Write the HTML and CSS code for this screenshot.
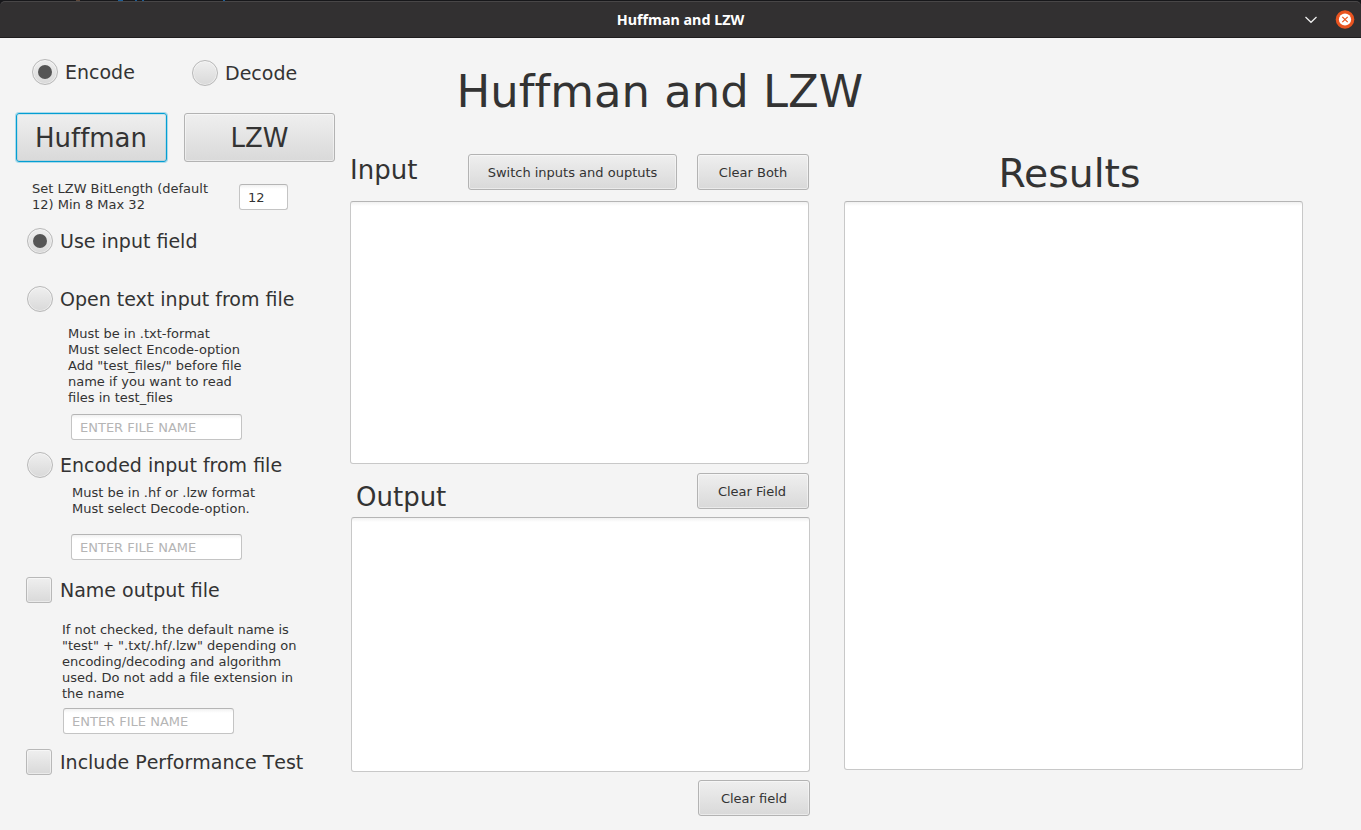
FILE: index.html
```html
<!DOCTYPE html>
<html lang="en">
<head>
<meta charset="utf-8">
<title>Huffman and LZW</title>
<link rel="stylesheet" href="styles.css">
</head>
<body>
<div class="desktop">
  <span class="speck speck-brown"></span><span class="speck speck-a"></span><span class="speck speck-b"></span><span class="speck speck-c"></span><span class="speck speck-d"></span>
</div>
<header class="titlebar">
  <div class="titlebar-text">Huffman and LZW</div>
  <div class="window-controls">
    <svg class="minimize" width="14" height="10" viewBox="0 0 14 10"><path d="M1.5 2L7 7.3L12.5 2" fill="none" stroke="#f0f0f0" stroke-width="1.2"/></svg>
    <svg class="close" width="20" height="20" viewBox="0 0 20 20"><circle cx="10" cy="9.5" r="9.3" fill="#e95420"/><circle cx="10" cy="9.5" r="6.1" fill="#fff"/><path d="M7.3 6.8L12.7 12.2M12.7 6.8L7.3 12.2" stroke="#e95420" stroke-width="1.2"/></svg>
  </div>
</header>
<main class="app">
  <section class="options">
    <div class="modes">
      <label class="choice"><span class="radio selected"></span><span>Encode</span></label>
      <label class="choice decode"><span class="radio"></span><span>Decode</span></label>
    </div>
    <div class="algorithms">
      <button class="button large focused">Huffman</button>
      <button class="button large">LZW</button>
    </div>
    <div class="bit-length">
      <p class="note">Set LZW BitLength (default<br>12) Min 8 Max 32</p>
      <input class="field short" value="12">
    </div>
    <label class="choice use-input"><span class="radio selected"></span><span>Use input field</span></label>
    <label class="choice open-text"><span class="radio"></span><span>Open text input from file</span></label>
    <p class="note text-note">Must be in .txt-format<br>Must select Encode-option<br>Add "test_files/" before file<br>name if you want to read<br>files in test_files</p>
    <input class="field text-file" placeholder="ENTER FILE NAME">
    <label class="choice open-encoded"><span class="radio"></span><span>Encoded input from file</span></label>
    <p class="note encoded-note">Must be in .hf or .lzw format<br>Must select Decode-option.</p>
    <input class="field encoded-file" placeholder="ENTER FILE NAME">
    <label class="choice name-output"><span class="checkbox"></span><span>Name output file</span></label>
    <p class="note output-note">If not checked, the default name is<br>"test" + ".txt/.hf/.lzw" depending on<br>encoding/decoding and algorithm<br>used. Do not add a file extension in<br>the name</p>
    <input class="field output-file" placeholder="ENTER FILE NAME">
    <label class="choice performance"><span class="checkbox"></span><span>Include Performance Test</span></label>
  </section>
  <section class="workspace">
    <h1 class="heading">Huffman and LZW</h1>
    <div class="panels">
      <div class="io">
        <div class="io-bar input-bar">
          <h2 class="label">Input</h2>
          <button class="button switch">Switch inputs and ouptuts</button>
          <button class="button clear">Clear Both</button>
        </div>
        <div class="area input-area"></div>
        <div class="io-bar output-bar">
          <h2 class="label output-label">Output</h2>
          <button class="button clear clear-output">Clear Field</button>
        </div>
        <div class="area output-area"></div>
        <button class="button clear last">Clear field</button>
      </div>
      <div class="results">
        <h2 class="results-title">Results</h2>
        <div class="area results-area"></div>
      </div>
    </div>
  </section>
</main>
</body>
</html>
```
FILE: styles.css
```css
* { box-sizing: border-box; }
body {
  margin: 0;
  height: 830px;
  display: flex;
  flex-direction: column;
  overflow: hidden;
  background: #f4f4f4;
  color: #333;
  font-family: "DejaVu Sans", sans-serif;
  font-size: 13px;
}
h1, h2, p { margin: 0; font-weight: normal; }

.desktop { height: 1px; background: #17171a; display: flex; flex: none; }
.speck { height: 1px; width: 2px; background: #1c5c94; }
.speck-brown { margin-left: 76px; width: 4px; background: #5c4638; }
.speck-a { margin-left: 38px; width: 5px; }
.speck-b { margin-left: 12px; }
.speck-c { margin-left: 5px; }
.speck-d { margin-left: 79px; }

.titlebar {
  height: 37px;
  flex: none;
  display: grid;
  grid-template-columns: 80px 1fr 80px;
  align-items: center;
  background: #323031;
  border-top: 1px solid #484647;
  border-bottom: 1px solid #1f1d1e;
  border-radius: 5px 5px 0 0;
  box-shadow: 0 -3px 0 3px #17171a;
  clip-path: inset(0);
}
.titlebar-text {
  grid-column: 2;
  text-align: center;
  color: #fff;
  font: bold 14.3px/20px "Noto Sans", sans-serif;
}
.window-controls { display: flex; align-items: center; justify-content: flex-end; gap: 17px; padding-right: 6px; }

.app { display: flex; flex: 1; }
.options { width: 350px; flex: none; display: flex; flex-direction: column; align-items: flex-start; padding-top: 21px; }

.modes { display: flex; padding-left: 32px; height: 27px; }
.modes .choice { width: 160px; }
.modes .decode { padding-top: 1px; }
.choice { display: flex; align-items: center; gap: 7px; height: 26px; margin-left: 27px; font-size: 19px; line-height: 26px; white-space: nowrap; flex: none; }
.modes .choice { margin-left: 0; }
.modes .decode { height: 27px; }
.radio, .checkbox {
  width: 26px;
  height: 26px;
  flex: none;
  display: flex;
  align-items: center;
  justify-content: center;
  border: 1px solid #b8b8b8;
  border-radius: 50%;
  background: linear-gradient(#efefef, #d9d9d9);
  box-shadow: inset 0 0 0 1px rgba(255, 255, 255, .45);
}
.checkbox { border-radius: 3px; }
.radio.selected::after { content: ""; width: 14px; height: 14px; border-radius: 50%; background: #555; }

.button {
  flex: none;
  padding: 2px 0 0;
  border: 1px solid #b3b3b3;
  border-radius: 3px;
  background: linear-gradient(#efefef, #d9d9d9);
  box-shadow: inset 0 0 0 1px rgba(255, 255, 255, .45);
  color: #333;
  font: 13px/16px "DejaVu Sans", sans-serif;
}
.algorithms { display: flex; gap: 17px; margin: 27px 0 0 16px; }
.button.large { width: 151px; height: 49px; padding: 0; font-size: 26px; line-height: 32px; font-variant-ligatures: none; }
.button.focused { padding-right: 1px; border-color: #039ed3; box-shadow: 0 0 0 1px rgba(3, 158, 211, .3), inset 0 0 0 1px rgba(3, 158, 211, .15); }

.note { font-size: 13px; line-height: 16px; white-space: nowrap; flex: none; }
.field {
  width: 171px;
  height: 26px;
  flex: none;
  padding: 0 8px;
  border: 1px solid #c4c4c4;
  border-top-color: #b5b5b5;
  border-radius: 3px;
  background: linear-gradient(#f1f1f1, #fff 4px);
  color: #333;
  font: 13px/16px "DejaVu Sans", sans-serif;
}
.field::placeholder { color: #b5b5b5; opacity: 1; }
.bit-length { display: flex; justify-content: space-between; align-items: center; width: 256px; height: 32px; margin: 18px 0 0 32px; padding-top: 1px; }
.field.short { width: 49px; padding-top: 2px; }

.use-input { margin-top: 16px; }
.open-text { margin-top: 32px; }
.text-note { margin: 14px 0 0 68px; }
.text-file { margin: 8px 0 0 71px; }
.open-encoded { margin-top: 12px; }
.encoded-note { margin: 7px 0 0 72px; }
.encoded-file { margin: 17px 0 0 71px; }
.name-output, .performance { margin-left: 26px; gap: 8px; }
.name-output { margin-top: 17px; }
.output-note { margin: 19px 0 0 62px; }
.output-file { margin: 6px 0 0 63px; }
.performance { margin-top: 15px; font-kerning: none; }

.workspace { display: flex; flex-direction: column; }
.heading { padding: 24px 0 0 106.5px; height: 116px; font-size: 44.9px; line-height: 60px; white-space: nowrap; font-variant-ligatures: none; }
.panels { display: flex; gap: 34px; }
.io { display: flex; flex-direction: column; width: 460px; }
.io-bar { display: flex; width: 459px; height: 36px; align-items: center; }
.label { flex: 1; font-size: 26px; line-height: 32px; padding-bottom: 4px; }
.output-label { padding: 12px 0 0 6px; }
.button.switch { width: 209px; height: 36px; margin-right: 20px; }
.button.clear { width: 112px; height: 36px; }
.button.clear-output { padding-right: 2px; }
.area {
  width: 459px;
  border: 1px solid #c8c8c8;
  border-top-color: #b5b5b5;
  border-radius: 3px;
  background: linear-gradient(#f1f1f1, #fff 4px);
}
.input-area { height: 263px; margin-top: 11px; }
.output-bar { margin-top: 9px; }
.output-area { height: 255px; margin: 8px 0 0 1px; }
.last { margin-top: 8px; align-self: flex-end; }
.results { width: 459px; }
.results-title { height: 47px; text-align: center; font-size: 39.3px; line-height: 40px; padding-right: 8px; }
.results-area { height: 569px; }
```
